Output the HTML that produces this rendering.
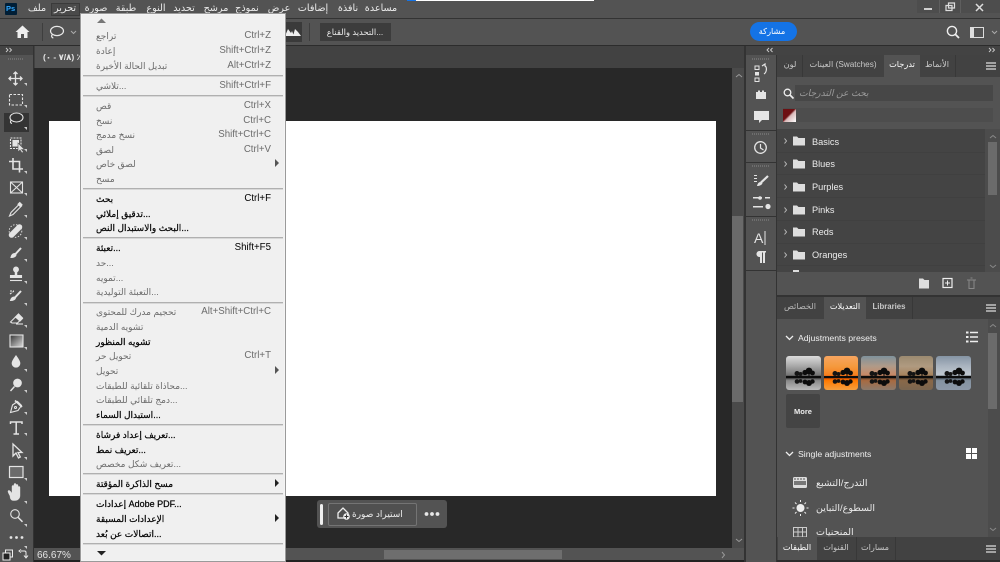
<!DOCTYPE html>
<html lang="ar"><head><meta charset="utf-8"><title>Photoshop</title>
<style>
html,body{margin:0;padding:0;width:1000px;height:562px;overflow:hidden;background:#535353}
body{position:relative;font-family:"Liberation Sans","DejaVu Sans",sans-serif}
.b{position:absolute}
.t{position:absolute;white-space:nowrap;line-height:14px;height:14px}
.c{transform:translateX(-50%)}
.mb{font-size:9.600px;color:#ececec;top:2px}
.m{left:96px;font-size:9px;color:#6c6c6c;margin-top:1px}
.m.e{color:#000;-webkit-text-stroke:.2px #000}
.s{right:729px;font-size:9.700px;color:#6c6c6c;margin-top:1px}
.s.e{color:#000}
.sep{position:absolute;left:83px;width:200px;height:1px;background:#b0b0b0;border-bottom:1px solid #d8d8d8}
.arr{position:absolute;left:275px;width:0;height:0;border-left:4px solid #555;border-top:4px solid transparent;border-bottom:4px solid transparent}
.arr.e{border-left-color:#222}
.tab{font-size:8.200px;color:#c8c8c8;top:0}
.row{left:812px;font-size:9.200px;color:#ececec;margin-top:1px}
svg{position:absolute;overflow:visible}
.tool{stroke:#e4e4e4;fill:none;stroke-width:1.100}
.dots{position:absolute;height:2px;background:repeating-linear-gradient(90deg,#6e6e6e 0 1px,transparent 1px 2px)}
.th{position:absolute;top:356px;height:34px;border-radius:3px;overflow:hidden}
</style></head><body>

<!-- base regions -->
<div class="b" style="left:0;top:0;width:1000px;height:18px;background:#535353"></div>
<div class="b" style="left:0;top:18px;width:1000px;height:1px;background:#333"></div>
<div class="b" style="left:0;top:45px;width:1000px;height:1px;background:#2c2c2c"></div>
<div class="b" style="left:0;top:46px;width:1000px;height:9px;background:#434343"></div>
<div class="b" style="left:407px;top:0;width:9px;height:1px;background:#1473e6"></div>
<div class="b" style="left:416px;top:0;width:178px;height:1px;background:#fff"></div>

<!-- document area -->
<div class="b" style="left:34px;top:46px;width:710px;height:22px;background:#424242"></div>
<div class="b" style="left:35px;top:46px;width:60px;height:22px;background:#535353"></div>
<div class="t" style="left:43px;top:50px;font-size:8.500px;color:#e4e4e4;font-weight:bold">(٧/٨ - ٠) ٪٦</div>
<div class="b" style="left:34px;top:68px;width:698px;height:480px;background:#282828"></div>
<div class="b" style="left:49px;top:121px;width:667px;height:375px;background:#fff"></div>
<div class="b" style="left:732px;top:68px;width:12px;height:480px;background:#4a4a4a"></div>
<div class="b" style="left:732px;top:216px;width:11px;height:186px;background:#6a6a6a"></div>
<svg style="left:735px;top:73px" width="8" height="6"><path d="M1 4l3-2.500L7 4" stroke="#999" fill="none"/></svg>
<svg style="left:735px;top:537px" width="8" height="6"><path d="M1 2l3 2.500L7 2" stroke="#999" fill="none"/></svg>
<div class="b" style="left:34px;top:548px;width:710px;height:12px;background:#535353"></div>
<div class="b" style="left:384px;top:550px;width:178px;height:9px;background:#6e6e6e"></div>
<svg style="left:720px;top:551px" width="6" height="8"><path d="M2 1l2.500 3L2 7" stroke="#999" fill="none"/></svg>
<div class="b" style="left:0;top:560px;width:778px;height:2px;background:#222"></div>
<div class="t" style="left:37px;top:549px;font-size:10px;color:#e4e4e4">66.67%</div>
<div class="b" style="left:744px;top:46px;width:2px;height:516px;background:#333"></div>

<!-- floating bar -->
<div class="b" style="left:317px;top:500px;width:130px;height:28px;background:#535353;border-radius:3px"></div>
<div class="b" style="left:320px;top:504px;width:3px;height:21px;background:#eee;border-radius:2px"></div>
<div class="b" style="left:328px;top:503px;width:87px;height:21px;border:1px solid #747474;border-radius:2px;background:#505050"></div>
<div class="t" style="left:352px;top:507px;font-size:9px;color:#eee">استيراد صورة</div>
<svg style="left:337px;top:507px" width="13" height="13"><path d="M1 6l5-5 5 5v5H1z" fill="none" stroke="#eee" stroke-width="1.300"/><circle cx="9.500" cy="9.500" r="3.300" fill="#eee"/><path d="M9.500 7.500v4M7.500 9.500h4" stroke="#333"/></svg>
<svg style="left:424px;top:511px" width="16" height="6"><circle cx="2.500" cy="3" r="1.900" fill="#e8e8e8"/><circle cx="8" cy="3" r="1.900" fill="#e8e8e8"/><circle cx="13.500" cy="3" r="1.900" fill="#e8e8e8"/></svg>

<!-- menu bar -->
<div class="b" style="left:5px;top:3px;width:12px;height:12px;background:#001e36;border-radius:1px"></div>
<div class="t" style="left:6px;top:2px;font-size:7.500px;font-weight:bold;color:#31a8ff">Ps</div>
<div class="b" style="left:51px;top:3px;width:27px;height:11px;border:1px solid #3a3a3a;background:#4a4a4a"></div>
<div class="t c mb" style="left:37px">ملف</div>
<div class="t c mb" style="left:65px">تحرير</div>
<div class="t c mb" style="left:96px">صورة</div>
<div class="t c mb" style="left:126px">طبقة</div>
<div class="t c mb" style="left:156px">النوع</div>
<div class="t c mb" style="left:184px">تحديد</div>
<div class="t c mb" style="left:216px">مرشح</div>
<div class="t c mb" style="left:247px">نموذج</div>
<div class="t c mb" style="left:279px">عرض</div>
<div class="t c mb" style="left:313px">إضافات</div>
<div class="t c mb" style="left:348px">نافذة</div>
<div class="t c mb" style="left:381px">مساعدة</div>

<!-- window controls -->
<div class="b" style="left:917px;top:0;width:83px;height:13px;background:#4d4d4d"></div>
<div class="b" style="left:939px;top:0;width:1px;height:13px;background:#5e5e5e"></div>
<div class="b" style="left:960px;top:0;width:1px;height:13px;background:#5e5e5e"></div>
<div class="b" style="left:924px;top:8px;width:8px;height:2px;background:#d0d0d0"></div>
<svg style="left:945px;top:2px" width="11" height="10"><path d="M3.500 1h6v5h-6zM1 3.500h6v5H1z" fill="#4d4d4d" stroke="#ddd" stroke-width="1.200"/></svg>
<svg style="left:975px;top:3px" width="9" height="9"><path d="M1 1l7 7M8 1L1 8" stroke="#ddd" stroke-width="1.500"/></svg>

<!-- options bar -->
<svg style="left:15px;top:25px" width="15" height="14"><path d="M7.500 0.500L14.500 7H12.500V13H9V9H6V13H2.500V7H.5z" fill="#eee"/></svg>
<div class="b" style="left:42px;top:23px;width:1px;height:18px;background:#3e3e3e"></div>
<svg style="left:49px;top:25px" width="16" height="15"><ellipse cx="8" cy="6" rx="6.500" ry="4.600" fill="none" stroke="#e8e8e8" stroke-width="1.200"/><path d="M3.500 9.500c-1.500 1-1 3 .8 3.500" fill="none" stroke="#e8e8e8" stroke-width="1.200"/></svg>
<svg style="left:70px;top:30px" width="7" height="5"><path d="M1 1l2.500 2.500L6 1" fill="none" stroke="#aaa"/></svg>
<div class="b" style="left:284px;top:22px;width:18px;height:20px;background:#3a3a3a"></div>
<svg style="left:285px;top:28px" width="16" height="9"><path d="M0 8L3 1l3 4 1-2 2 5zM8 8l2-7 3 3 3 4z" fill="#eee"/></svg>
<div class="b" style="left:309px;top:23px;width:1px;height:18px;background:#3e3e3e"></div>
<div class="b" style="left:320px;top:23px;width:71px;height:18px;background:#3c3c3c"></div>
<div class="t c" style="left:355px;top:25px;font-size:8.400px;color:#eaeaea">التحديد والقناع...</div>
<div class="b" style="left:750px;top:22px;width:47px;height:19px;background:#1473e6;border-radius:10px"></div>
<div class="t c" style="left:772px;top:25px;font-size:8.200px;color:#fff">مشاركة</div>
<svg style="left:946px;top:25px" width="14" height="14"><circle cx="6" cy="6" r="4.600" fill="none" stroke="#eee" stroke-width="1.400"/><path d="M9.500 9.500L13 13" stroke="#eee" stroke-width="1.800"/></svg>
<div class="b" style="left:970px;top:27px;width:12px;height:9px;border:1px solid #ddd;background:linear-gradient(90deg,#ddd 0 3px,transparent 3px)"></div>
<svg style="left:991px;top:30px" width="7" height="5"><path d="M1 1l2.500 2.500L6 1" fill="none" stroke="#aaa"/></svg>

<!-- left toolbar -->
<div class="b" style="left:0;top:46px;width:33px;height:516px;background:#535353"></div>
<div class="b" style="left:33px;top:46px;width:1px;height:516px;background:#333"></div>
<div class="b" style="left:0;top:46px;width:33px;height:9px;background:#434343"></div>
<svg style="left:5px;top:47px" width="8" height="6"><path d="M1 1l2 2-2 2M4.500 1l2 2-2 2" fill="none" stroke="#ccc" stroke-width=".9"/></svg>
<div class="dots" style="left:8px;top:58px;width:16px"></div>
<div class="b" style="left:4px;top:113px;width:25px;height:19px;background:#343434"></div>

<svg style="left:0;top:68px" width="33" height="490">
<g class="tool">
<!-- move -->
<path d="M15.500 4v13M9 10.500h13M13.500 6L15.500 4l2 2M13.500 15L15.500 17l2-2M11 8.500L9 10.500 11 12.500M20 8.500L22 10.500 20 12.500" stroke-width="1.300"/>
<!-- marquee -->
<rect x="9.500" y="26.500" width="13" height="10.500" stroke-dasharray="2.500 1.500"/>
<!-- lasso -->
<ellipse cx="16.500" cy="49.500" rx="6.500" ry="4.500"/><path d="M11.500 52c-1.500 1-1.500 3 .5 3.500"/>
<!-- object select -->
<rect x="10.500" y="70" width="10.500" height="10.500" stroke-dasharray="2 1"/>
<rect x="13" y="72.500" width="5.500" height="5.500" fill="#e4e4e4"/>
<path d="M18 75l0 9 2-2 2 3 1.500-1-2-2.500h3z" fill="#e4e4e4" stroke="#535353" stroke-width=".6"/>
<!-- crop -->
<path d="M13 90v11h10M9 93.500h10.500v11" stroke-width="1.600"/>
<!-- frame -->
<rect x="10.500" y="114" width="12" height="11"/><path d="M10.500 114l12 11M22.500 114l-12 11"/>
<!-- eyedropper -->
<g transform="translate(0 2)"><path d="M20 133.500l-9 9-1.500 3.500 3.500-1.500 9-9"/><path d="M18.500 133l3 3" stroke-width="3.500"/></g>
<!-- healing -->
<g transform="translate(0 5)"><path d="M11.500 162l8-8" stroke-width="5.500" stroke-linecap="round"/><circle cx="15.500" cy="158" r="6.300" stroke-dasharray="1.500 1.500" stroke-width=".9"/></g>
<!-- brush -->
<g transform="translate(0 3)"><path d="M21 177l-5.500 6" stroke-width="2"/><path d="M15 182.500c-2 0-3.500 1.500-4 4 2.500 0 4.500-1 5-2.500z" fill="#e4e4e4"/></g>
<!-- stamp -->
<g transform="translate(0 2)"><circle cx="16" cy="199.500" r="2.400" fill="#e4e4e4"/><path d="M16 202v3" stroke-width="2.500"/><path d="M10.500 205.500h11v2h-11z" fill="#e4e4e4"/><path d="M10 210.500h12"/></g>
<!-- history brush -->
<path d="M21 223l-6 6.500" stroke-width="2"/><path d="M14.500 229c-2 0-3.500 1.500-4 3.500 2.500 0 4.500-1 5-2.500z" fill="#e4e4e4"/><path d="M10 226l4-3M10 223h4" stroke-dasharray="2 1"/>
<!-- eraser -->
<path d="M10.500 254l8-8 4 4-5 5H12z"/><path d="M15.500 249l4.500 4 2.500-2.500-4-4.500z" fill="#e4e4e4"/><path d="M16 256h7"/>
<!-- drop -->
<path d="M16 288c-2.300 3.200-3.800 5.200-3.800 7.300a3.800 3.800 0 0 0 7.600 0c0-2.100-1.500-4.100-3.800-7.300z" fill="#e4e4e4"/>
<!-- dodge -->
<g transform="translate(0 4)"><circle cx="17.500" cy="311" r="3.800" fill="#e4e4e4"/><path d="M14.500 314.500l-4 4.500" stroke-width="1.400"/></g>
<!-- pen -->
<g transform="translate(0 2)"><path d="M10.500 342.500l2-7.500 5-3.500 4 4-3.500 5z"/><path d="M15 330.500l7 6.500" stroke-width="1.700"/><circle cx="15.500" cy="337.500" r="1"/></g>
<!-- T -->
<g transform="translate(0 2)"><path d="M10.500 354v-2h11.500v2M16.200 352v12M13.500 364h5.500" stroke-width="1.500"/></g>
<!-- arrow -->
<path d="M13 376v12l3-3 2.500 5 1.800-1-2.300-4.500h4z" fill="#535353" stroke-width="1.300"/>
<!-- rect -->
<rect x="9.500" y="398.500" width="13.500" height="11" fill="#6b6b6b" stroke-width="1.200"/>
<!-- hand -->
<g transform="translate(0 5)"><path d="M10 423c-1-2-3-5-1.500-5.500 1-.5 2.500 1 3.500 3v-7c0-1.500 2-1.500 2 0v5-7c0-1.500 2-1.500 2 0v7-6c0-1.500 2-1.500 2 0v6-4c0-1.500 2-1.500 2 0v8c0 3-2 5-5 5h-2c-2 0-3-2-3-4.500z" fill="#e4e4e4" stroke-width=".4"/></g>
<!-- zoom -->
<g transform="translate(0 1)"><circle cx="15" cy="445" r="4.300"/><path d="M18.200 448.500l4.300 4.300" stroke-width="1.500"/></g>
</g>
<defs><linearGradient id="g1" x1="0" y1="0" x2="1" y2="1"><stop offset="0" stop-color="#333"/><stop offset="1" stop-color="#ddd"/></linearGradient></defs>
<rect x="10" y="267" width="13" height="12" fill="url(#g1)" stroke="#e4e4e4" stroke-width="1.100"/>
<circle cx="11" cy="469.500" r="1.400" fill="#e4e4e4"/><circle cx="16.500" cy="469.500" r="1.400" fill="#e4e4e4"/><circle cx="22" cy="469.500" r="1.400" fill="#e4e4e4"/>
<path d="M27 18v-3h-3zM27 62v-3h-3zM27 84v-3h-3zM27 106v-3h-3zM27 128v-3h-3zM27 150v-3h-3zM27 172v-3h-3zM27 194v-3h-3zM27 216v-3h-3zM27 238v-3h-3zM27 260v-3h-3zM27 282v-3h-3zM27 304v-3h-3zM27 325v-3h-3zM27 347v-3h-3zM27 368v-3h-3zM27 392v-3h-3zM27 413v-3h-3zM27 436v-3h-3zM27 459v-3h-3zM27 481v-3h-3zM27 40v-3h-3z" fill="#ccc"/>
</svg>
<svg style="left:2px;top:549px" width="26" height="12"><rect x="3.500" y="1" width="7" height="7" fill="none" stroke="#eee"/><rect x="1" y="4" width="7" height="7" fill="#222" stroke="#eee"/><path d="M19 2h3.500c1 0 1.500 .5 1.500 1.500V8M22 6.500l2 2.500 2-2.500M19 .5l-2 1.500 2 1.500" fill="none" stroke="#eee"/></svg>

<!-- right panels -->
<div class="b" style="left:746px;top:55px;width:30px;height:507px;background:#535353"></div>
<div class="b" style="left:776px;top:46px;width:1px;height:516px;background:#333"></div>
<div class="b" style="left:746px;top:46px;width:254px;height:9px;background:#434343"></div>
<svg style="left:766px;top:47px" width="8" height="6"><path d="M3 1L1 3l2 2M6.500 1l-2 2 2 2" fill="none" stroke="#ccc" stroke-width=".9"/></svg>
<svg style="left:988px;top:47px" width="8" height="6"><path d="M1 1l2 2-2 2M4.500 1l2 2-2 2" fill="none" stroke="#ccc" stroke-width=".9"/></svg>
<div class="dots" style="left:752px;top:58px;width:18px"></div>
<div class="dots" style="left:752px;top:133px;width:18px"></div>
<div class="dots" style="left:752px;top:165px;width:18px"></div>
<div class="dots" style="left:752px;top:219px;width:18px"></div>
<div class="b" style="left:746px;top:130px;width:30px;height:1px;background:#333"></div>
<div class="b" style="left:746px;top:162px;width:30px;height:1px;background:#333"></div>
<div class="b" style="left:746px;top:216px;width:30px;height:1px;background:#333"></div>
<div class="b" style="left:746px;top:270px;width:30px;height:1px;background:#333"></div>
<svg style="left:746px;top:55px" width="30" height="215" fill="#e4e4e4">
<rect x="9" y="11" width="4" height="3.500" fill="none" stroke="#e4e4e4"/><rect x="9" y="17" width="4" height="3.500"/><rect x="9" y="23" width="4" height="3.500" fill="none" stroke="#e4e4e4"/>
<path d="M16 11l3-2v2c2 1 2 6-1 8" fill="none" stroke="#e4e4e4" stroke-width="1.200"/>
<path d="M10 37h2v-1.500h2V37h2v-1.500h2V37h2v7H10z"/>
<path d="M8 56h15v9h-7l-3 3v-3H8z"/>
<circle cx="14.500" cy="92.500" r="5.800" fill="none" stroke="#e4e4e4" stroke-width="1.300"/><path d="M14.500 89v4l3 2" fill="none" stroke="#e4e4e4" stroke-width="1.200"/>
<path d="M22 121l-7 6.500" stroke="#e4e4e4" stroke-width="2.200"/><path d="M14.500 127c-2 0-3 2-3.500 4 2.500 0 5-1 5.500-3zM8 120h3v1H8zM8 123h3v1H8zM8 126h3v1H8z"/>
<path d="M7 142h9v1.500H7zM19 142h5v1.500h-5zM7 151h10v1.500H7z"/><circle cx="22" cy="151.500" r="2.600"/><circle cx="14" cy="143" r="1.800"/>
<text x="8" y="188" font-family="Liberation Sans" font-size="14" fill="#e4e4e4">A</text><rect x="18.500" y="176" width="1" height="14"/>
<path d="M13 196h7v1.500h-1V208h-2v-10.500h-1V208h-2v-6a3 3 0 0 1 -1-6z"/>
</svg>

<!-- top panel -->
<div class="b" style="left:777px;top:55px;width:223px;height:22px;background:#424242"></div>
<div class="b" style="left:884px;top:55px;width:36px;height:22px;background:#535353"></div>
<div class="b" style="left:777px;top:77px;width:223px;height:196px;background:#535353"></div>
<div class="t c tab" style="left:790px;top:58px">لون</div>
<div class="t c tab" style="left:843px;top:58px">العينات (Swatches)</div>
<div class="t c tab" style="left:902px;top:58px;color:#fff">تدرجات</div>
<div class="t c tab" style="left:937px;top:58px">الأنماط</div>
<div class="b" style="left:802px;top:55px;width:1px;height:22px;background:#383838"></div>
<div class="b" style="left:955px;top:55px;width:1px;height:22px;background:#383838"></div>
<svg style="left:986px;top:62px" width="11" height="8"><path d="M0 1h10M0 4h10M0 7h10" stroke="#ddd" stroke-width="1.300"/></svg>
<svg style="left:783px;top:88px" width="11" height="11"><circle cx="4.500" cy="4.500" r="3.300" fill="none" stroke="#eee" stroke-width="1.300"/><path d="M7 7l3.500 3.500" stroke="#eee" stroke-width="1.600"/></svg>
<div class="b" style="left:795px;top:85px;width:198px;height:16px;background:#474747"></div>
<div class="t" style="left:799px;top:86px;font-size:9.200px;color:#9a9a9a;font-style:italic">بحث عن التدرجات</div>
<div class="b" style="left:783px;top:108px;width:210px;height:14px;background:#4d4d4d"></div>
<div class="b" style="left:783px;top:109px;width:13px;height:13px;background:linear-gradient(135deg,#6d0f12 0 45%,#d9b9b9 55%,#fff 100%)"></div>

<div class="b" style="left:777px;top:129px;width:208px;height:143px;background:#444"></div>
<div class="b" style="left:985px;top:129px;width:15px;height:143px;background:#4c4c4c"></div>
<div class="b" style="left:988px;top:142px;width:9px;height:53px;background:#6b6b6b"></div>
<svg style="left:989px;top:134px" width="8" height="6"><path d="M1 4l3-2.500L7 4" stroke="#888" fill="none"/></svg>
<svg style="left:989px;top:263px" width="8" height="6"><path d="M1 2l3 2.500L7 2" stroke="#888" fill="none"/></svg>
<div class="b" style="left:777px;top:152px;width:208px;height:1px;background:#404040"></div>
<div class="b" style="left:777px;top:174px;width:208px;height:1px;background:#404040"></div>
<div class="b" style="left:777px;top:197px;width:208px;height:1px;background:#404040"></div>
<div class="b" style="left:777px;top:220px;width:208px;height:1px;background:#404040"></div>
<div class="b" style="left:777px;top:243px;width:208px;height:1px;background:#404040"></div>
<div class="b" style="left:777px;top:265px;width:208px;height:1px;background:#404040"></div>
<svg style="left:777px;top:129px" width="35" height="143">
<defs><g id="fr"><path d="M7.500 4.500l2 2.500-2 2.500" fill="none" stroke="#bbb"/><path d="M16 2.500h4l1.500 1.500H28v7.500H16z" fill="#ddd"/></g></defs>
<use href="#fr" y="5"/><use href="#fr" y="28"/><use href="#fr" y="51"/><use href="#fr" y="74"/><use href="#fr" y="96"/><use href="#fr" y="119"/>
<path d="M16 141h6v2h-6z" fill="#ddd"/>
</svg>
<div class="t row" style="top:134px">Basics</div>
<div class="t row" style="top:156px">Blues</div>
<div class="t row" style="top:179px">Purples</div>
<div class="t row" style="top:202px">Pinks</div>
<div class="t row" style="top:224px">Reds</div>
<div class="t row" style="top:247px">Oranges</div>

<svg style="left:918px;top:277px" width="62" height="13">
<path d="M1 1.500h4l1.500 1.500H11v8.500H1z" fill="#ddd"/>
<rect x="25" y="1.500" width="9" height="9" fill="none" stroke="#eee" stroke-width="1.200"/><path d="M29.500 3.500v5M27 6h5" stroke="#eee"/>
<path d="M49 3h9M51 3v8.500h5V3M52.500 1h2" fill="none" stroke="#888"/>
</svg>
<div class="b" style="left:777px;top:295px;width:223px;height:2px;background:#333"></div>

<!-- second panel -->
<div class="b" style="left:777px;top:297px;width:223px;height:22px;background:#424242"></div>
<div class="b" style="left:824px;top:297px;width:42px;height:22px;background:#535353"></div>
<div class="b" style="left:777px;top:319px;width:223px;height:218px;background:#535353"></div>
<div class="t c tab" style="left:800px;top:300px;color:#b8b8b8">الخصائص</div>
<div class="t c tab" style="left:845px;top:300px;color:#fff">التعديلات</div>
<div class="t c tab" style="left:889px;top:300px;font-weight:bold;color:#c8c8c8;font-size:7.800px">Libraries</div>
<div class="b" style="left:912px;top:297px;width:1px;height:22px;background:#383838"></div>
<svg style="left:986px;top:304px" width="11" height="8"><path d="M0 1h10M0 4h10M0 7h10" stroke="#ddd" stroke-width="1.300"/></svg>
<div class="b" style="left:988px;top:319px;width:12px;height:218px;background:#4c4c4c"></div>
<div class="b" style="left:988px;top:333px;width:9px;height:76px;background:#6b6b6b"></div>
<svg style="left:989px;top:323px" width="8" height="6"><path d="M1 4l3-2.500L7 4" stroke="#888" fill="none"/></svg>
<svg style="left:989px;top:526px" width="8" height="6"><path d="M1 2l3 2.500L7 2" stroke="#888" fill="none"/></svg>
<svg style="left:785px;top:335px" width="9" height="6"><path d="M1 1l3.500 3.500L8 1" fill="none" stroke="#eee" stroke-width="1.300"/></svg>
<div class="t" style="left:798px;top:331px;font-size:8.700px;color:#f0f0f0">Adjustments presets</div>
<svg style="left:966px;top:331px" width="12" height="12"><path d="M4 1.500h8M4 6h8M4 10.500h8" stroke="#eee" stroke-width="1.500"/><path d="M0 .5h2.500v2H0zM0 5h2.500v2H0zM0 9.500h2.500v2H0z" fill="#eee"/></svg>

<svg width="0" height="0" style="position:absolute"><defs>
<g id="tree"><rect x="0" y="20" width="35" height="2.200" fill="#0c0c0c"/>
<circle cx="11" cy="17.500" r="2.500" fill="#141414"/><circle cx="14.500" cy="18" r="2" fill="#141414"/>
<circle cx="19" cy="16.500" r="2.600" fill="#0c0c0c"/><circle cx="23" cy="15" r="3.400" fill="#0c0c0c"/><circle cx="26.500" cy="17" r="2.400" fill="#0c0c0c"/>
<rect x="22.500" y="17" width="1" height="4" fill="#0c0c0c"/>
<circle cx="11" cy="25.500" r="2.300" fill="#141414"/><circle cx="14.500" cy="25" r="1.900" fill="#141414"/>
<circle cx="19" cy="26" r="2.400" fill="#0c0c0c"/><circle cx="23" cy="27" r="3" fill="#0c0c0c"/><circle cx="26.500" cy="25.500" r="2.200" fill="#0c0c0c"/></g></defs></svg>
<div class="th" style="left:786px;width:35px;background:linear-gradient(#dcdcdc 0,#a8a8a8 30%,#777 55%,#333 62%,#888 72%,#bbb 100%)"><svg width="35" height="34"><use href="#tree"/></svg></div>
<div class="th" style="left:824px;width:34px;background:linear-gradient(#f6a560 0,#f59a3e 30%,#f57f1e 56%,#d43c00 62%,#ff7a00 72%,#f5a040 100%)"><svg width="35" height="34"><use href="#tree"/></svg></div>
<div class="th" style="left:861px;width:35px;background:linear-gradient(#7f929c 0,#b09a88 30%,#c78a68 55%,#5a3a28 62%,#a86a40 72%,#8b7a6c 100%)"><svg width="35" height="34"><use href="#tree"/></svg></div>
<div class="th" style="left:899px;width:34px;background:linear-gradient(#9b8a70 0,#b09a80 30%,#a78560 55%,#4a3622 62%,#8a6848 72%,#7a6650 100%)"><svg width="35" height="34"><use href="#tree"/></svg></div>
<div class="th" style="left:936px;width:35px;background:linear-gradient(#8594a4 0,#aab4c0 30%,#c0c8d0 55%,#39434e 62%,#8492a0 72%,#8d99a8 100%)"><svg width="35" height="34"><use href="#tree"/></svg></div>
<div class="b" style="left:786px;top:394px;width:34px;height:34px;background:#444;border-radius:2px"></div>
<div class="t c" style="left:803px;top:405px;font-size:7.500px;font-weight:bold;color:#eee">More</div>

<svg style="left:785px;top:451px" width="9" height="6"><path d="M1 1l3.500 3.500L8 1" fill="none" stroke="#eee" stroke-width="1.300"/></svg>
<div class="t" style="left:798px;top:447px;font-size:8.700px;color:#f0f0f0">Single adjustments</div>
<div class="b" style="left:966px;top:448px;width:11px;height:11px;background:
linear-gradient(#fff,#fff) 0 0/5px 5px no-repeat,linear-gradient(#fff,#fff) 6px 0/5px 5px no-repeat,linear-gradient(#fff,#fff) 0 6px/5px 5px no-repeat,linear-gradient(#fff,#fff) 6px 6px/5px 5px no-repeat"></div>
<svg style="left:792px;top:475px" width="18" height="62"><rect x="1" y="2" width="14" height="11" rx="1.500" fill="#ddd"/><path d="M2 4h12" stroke="#555" stroke-dasharray="2 1"/><rect x="2" y="6" width="12" height="4" fill="#777"/>
<circle cx="8.500" cy="33" r="4" fill="#eee"/><path d="M8.500 25v2M8.500 39v2M.5 33h2M14.500 33h2M3 27.500l1.500 1.500M12.500 37l1.500 1.500M14 27.500L12.500 29M4.500 37L3 38.500" stroke="#eee"/>
<rect x="1.500" y="52.500" width="13" height="9.500" fill="none" stroke="#ccc"/><path d="M6 52.500V62M10.500 52.500V62M1.500 57h13" stroke="#ccc"/></svg>
<div class="t" style="left:816px;top:477px;font-size:9.500px;color:#eaeaea">التدرج/التشبع</div>
<div class="t" style="left:816px;top:502px;font-size:9.500px;color:#eaeaea">السطوع/التباين</div>
<div class="b" style="left:816px;top:526px;width:170px;height:11px;overflow:hidden"><div class="t" style="left:0;top:0;font-size:9.500px;color:#eaeaea">المنحنيات</div></div>

<!-- bottom tabs -->
<div class="b" style="left:777px;top:537px;width:223px;height:23px;background:#424242"></div>
<div class="b" style="left:778px;top:537px;width:39px;height:23px;background:#535353"></div>
<div class="t c tab" style="left:797px;top:541px;color:#fff">الطبقات</div>
<div class="t c tab" style="left:836px;top:541px">القنوات</div>
<div class="t c tab" style="left:875px;top:541px">مسارات</div>
<div class="b" style="left:856px;top:537px;width:1px;height:23px;background:#383838"></div>
<div class="b" style="left:895px;top:537px;width:1px;height:23px;background:#383838"></div>
<svg style="left:986px;top:545px" width="11" height="8"><path d="M0 1h10M0 4h10M0 7h10" stroke="#ddd" stroke-width="1.300"/></svg>
<div class="b" style="left:777px;top:560px;width:223px;height:2px;background:#2c2c2c"></div>

<!-- menu -->
<div class="b" style="left:80px;top:13px;width:206px;height:549px;background:#f0f0f0;box-shadow:inset 0 0 0 1px #9a9a9a,inset 0 0 0 2px #f4f4f4"></div>
<svg style="left:96px;top:18px" width="11" height="6"><path d="M1 5l4.500-4.500L10 5z" fill="#777"/></svg>

<div class="t m" style="top:28px">تراجع</div><div class="t s" style="top:28px">Ctrl+Z</div>
<div class="t m" style="top:43px">إعادة</div><div class="t s" style="top:43px">Shift+Ctrl+Z</div>
<div class="t m" style="top:58px">تبديل الحالة الأخيرة</div><div class="t s" style="top:58px">Alt+Ctrl+Z</div>
<div class="sep" style="top:75px"></div>
<div class="t m" style="top:78px">تلاشي...</div><div class="t s" style="top:78px">Shift+Ctrl+F</div>
<div class="sep" style="top:95px"></div>
<div class="t m" style="top:98px">قص</div><div class="t s" style="top:98px">Ctrl+X</div>
<div class="t m" style="top:113px">نسخ</div><div class="t s" style="top:113px">Ctrl+C</div>
<div class="t m" style="top:127px">نسخ مدمج</div><div class="t s" style="top:127px">Shift+Ctrl+C</div>
<div class="t m" style="top:142px">لصق</div><div class="t s" style="top:142px">Ctrl+V</div>
<div class="t m" style="top:156px">لصق خاص</div><div class="arr" style="top:159px"></div>
<div class="t m" style="top:171px">مسح</div>
<div class="sep" style="top:188px"></div>
<div class="t m e" style="top:191px">بحث</div><div class="t s e" style="top:191px">Ctrl+F</div>
<div class="t m e" style="top:206px">تدقيق إملائي...</div>
<div class="t m e" style="top:220px">البحث والاستبدال النص...</div>
<div class="sep" style="top:237px"></div>
<div class="t m e" style="top:240px">تعبئة...</div><div class="t s e" style="top:240px">Shift+F5</div>
<div class="t m" style="top:255px">حد...</div>
<div class="t m" style="top:270px">تمويه...</div>
<div class="t m" style="top:284px">التعبئة التوليدية...</div>
<div class="sep" style="top:302px"></div>
<div class="t m" style="top:304px">تحجيم مدرك للمحتوى</div><div class="t s" style="top:304px">Alt+Shift+Ctrl+C</div>
<div class="t m" style="top:319px">تشويه الدمية</div>
<div class="t m e" style="top:334px">تشويه المنظور</div>
<div class="t m" style="top:348px">تحويل حر</div><div class="t s" style="top:348px">Ctrl+T</div>
<div class="t m" style="top:363px">تحويل</div><div class="arr" style="top:366px"></div>
<div class="t m" style="top:378px">محاذاة تلقائية للطبقات...</div>
<div class="t m" style="top:392px">دمج تلقائي للطبقات...</div>
<div class="t m e" style="top:407px">استبدال السماء...</div>
<div class="sep" style="top:424px"></div>
<div class="t m e" style="top:427px">تعريف إعداد فرشاة...</div>
<div class="t m e" style="top:442px">تعريف نمط...</div>
<div class="t m" style="top:456px">تعريف شكل مخصص...</div>
<div class="sep" style="top:473px"></div>
<div class="t m e" style="top:476px">مسح الذاكرة المؤقتة</div><div class="arr e" style="top:479px"></div>
<div class="sep" style="top:493px"></div>
<div class="t m e" style="top:496px">إعدادات Adobe PDF...</div>
<div class="t m e" style="top:511px">الإعدادات المسبقة</div><div class="arr e" style="top:514px"></div>
<div class="t m e" style="top:526px">اتصالات عن بُعد...</div>
<div class="sep" style="top:543px"></div>
<svg style="left:96px;top:550px" width="11" height="6"><path d="M1 1l4.500 4.500L10 1z" fill="#222"/></svg>
</body></html>
